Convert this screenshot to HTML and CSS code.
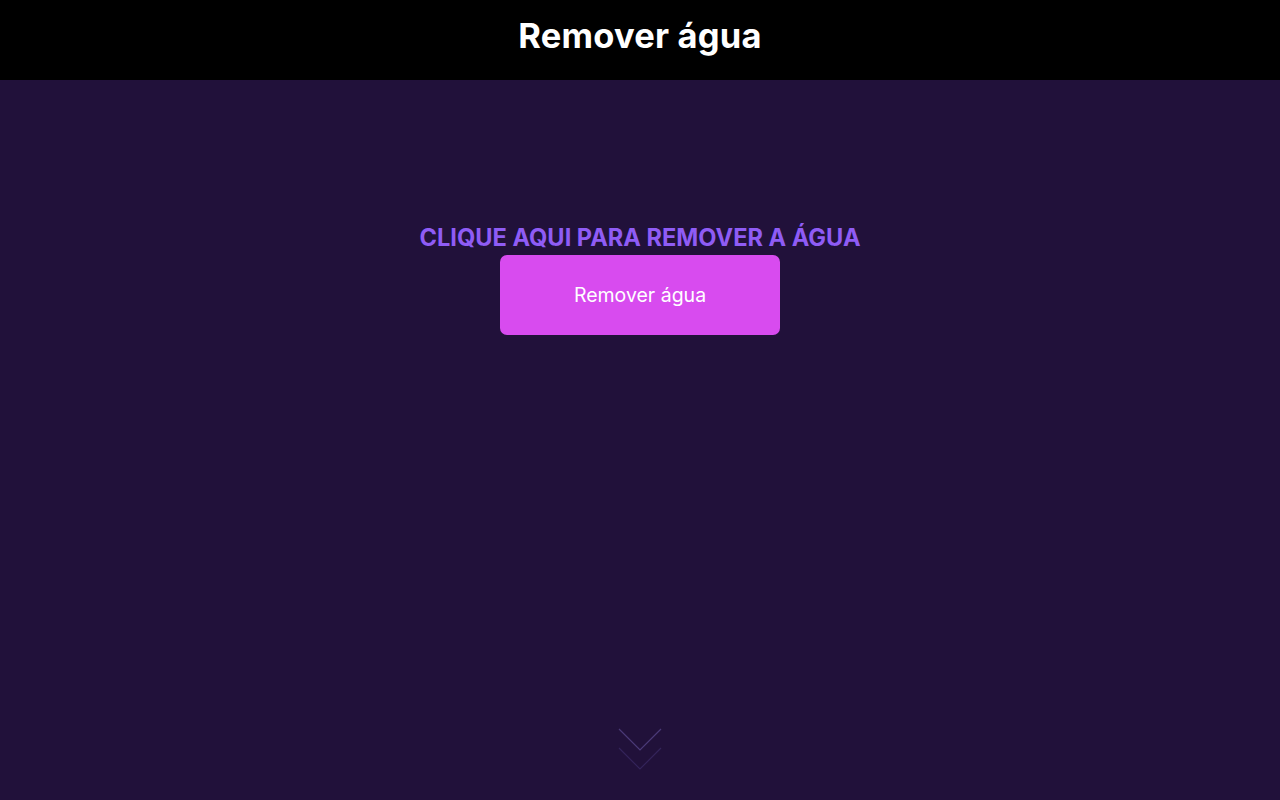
FILE: index.html
```html
<!DOCTYPE html>
<html lang="pt">
<head>
<meta charset="utf-8">
<title>Remover água</title>
<link rel="stylesheet" href="styles.css">
</head>
<body>
<header class="topbar">
  <h1 class="title">Remover água</h1>
</header>
<main class="stage">
  <section class="panel">
    <h2 class="cta-label">CLIQUE AQUI PARA REMOVER A ÁGUA</h2>
    <button class="cta-button" type="button">Remover água</button>
  </section>
  <div class="scroll-hint" aria-hidden="true">
    <svg width="44" height="44" viewBox="0 0 44 44">
      <polyline points="1,1 22,22 43,1" fill="none" stroke="#4b3a78" stroke-width="1.2"/>
      <polyline points="1,20 22,41 43,20" fill="none" stroke="#34245a" stroke-width="1.2"/>
    </svg>
  </div>
</main>
</body>
</html>
```
FILE: styles.css
```css
* { box-sizing: border-box; }
html, body { margin: 0; padding: 0; }
body {
  font-family: Inter, "Open Sans", sans-serif;
  background: #21113a;
  color: #fff;
  height: 800px;
  overflow: hidden;
}
.topbar {
  height: 80px;
  background: #000;
  display: flex;
  align-items: center;
  justify-content: center;
  padding-bottom: 8px;
}
.title {
  margin: 0;
  font-size: 34.5px;
  font-weight: 700;
  letter-spacing: 0.2px;
  line-height: 1;
}
.stage {
  height: 720px;
  display: flex;
  flex-direction: column;
  align-items: center;
}
.panel {
  display: flex;
  flex-direction: column;
  align-items: center;
  padding-top: 143px;
}
.cta-label {
  margin: 0;
  font-size: 23.6px;
  font-weight: 700;
  color: #8f5cf5;
  line-height: 30px;
  height: 32px;
}
.cta-button {
  width: 280px;
  height: 80px;
  border: none;
  border-radius: 7px;
  background: #d84bef;
  color: #fff;
  font-family: inherit;
  font-size: 19.5px;
  font-weight: 400;
  cursor: pointer;
}
.scroll-hint {
  margin-top: auto;
  margin-bottom: 28px;
  height: 44px;
}
.scroll-hint svg { display: block; }
```
